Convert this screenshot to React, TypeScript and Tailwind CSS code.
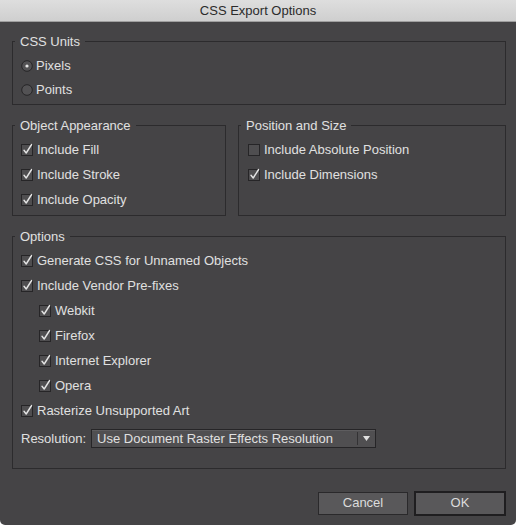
import React from 'react';

function CheckBox({ checked }: { checked: boolean }) {
  return (
    <svg width="13" height="13" viewBox="0 0 13 13" className="shrink-0">
      <rect x="0.5" y="1.5" width="11" height="11" fill="#4f4e50" stroke="#262527" />
      {checked && (
        <path d="M3 7.2 L5.2 10 L10.6 1.5" fill="none" stroke="#e4e4e4" strokeWidth="1.4" strokeLinecap="round" strokeLinejoin="round" />
      )}
    </svg>
  );
}

function Radio({ selected }: { selected: boolean }) {
  return (
    <svg width="12" height="12" viewBox="0 0 12 12" className="shrink-0">
      <circle cx="6" cy="6" r="5.3" fill="#535254" stroke="#262527" />
      {selected && <circle cx="6" cy="6" r="1.6" fill="#e6e6e6" />}
    </svg>
  );
}

function CheckRow({ label, checked = true, indent = false }: { label: string; checked?: boolean; indent?: boolean }) {
  return (
    <div className={`flex h-[25px] items-center gap-[3px] ${indent ? 'pl-[26px]' : 'pl-[8px]'}`}>
      <CheckBox checked={checked} />
      <span>{label}</span>
    </div>
  );
}

function RadioRow({ label, selected = false }: { label: string; selected?: boolean }) {
  return (
    <div className="flex h-[24px] items-center gap-[3px] pl-[8px]">
      <Radio selected={selected} />
      <span>{label}</span>
    </div>
  );
}

function Group({ title, className = '', children }: { title: string; className?: string; children: React.ReactNode }) {
  return (
    <fieldset className={`border border-[#2c2b2d] ${className}`}>
      <legend className="ml-[2px] px-[5px] leading-[15px]">{title}</legend>
      {children}
    </fieldset>
  );
}

export default function App() {
  return (
    <div className="w-[516px] h-[525px] bg-white">
      <div
        className="flex h-[525px] flex-col overflow-hidden rounded-b-[5px] bg-[#454446] text-[13px] text-[#e0e0e0]"
        style={{ fontFamily: '"Liberation Sans", Arial, sans-serif' }}
      >
        {/* Title bar */}
        <div className="flex h-[22px] shrink-0 items-center justify-center border-b border-[#9f9f9f] bg-gradient-to-b from-[#dedede] to-[#cfcfcf] text-[13px] text-[#2b2b2b]">
          CSS Export Options
        </div>

        <div className="flex flex-col pl-[12px] pr-[10px] pt-[12px]">
          <Group title="CSS Units" className="pt-[5px] pb-[2px]">
            <RadioRow label="Pixels" selected />
            <RadioRow label="Points" />
          </Group>

          <div className="mt-[13px] flex gap-[12px]">
            <Group title="Object Appearance" className="w-[214px] pt-[4px] pb-[3px]">
              <CheckRow label="Include Fill" />
              <CheckRow label="Include Stroke" />
              <CheckRow label="Include Opacity" />
            </Group>
            <Group title="Position and Size" className="flex-1 pt-[4px] pb-[3px] [&>div]:pl-[9px]">
              <CheckRow label="Include Absolute Position" checked={false} />
              <CheckRow label="Include Dimensions" />
            </Group>
          </div>

          <Group title="Options" className="mt-[13px] pt-[4px] pb-[19px]">
            <CheckRow label="Generate CSS for Unnamed Objects" />
            <CheckRow label="Include Vendor Pre-fixes" />
            <CheckRow label="Webkit" indent />
            <CheckRow label="Firefox" indent />
            <CheckRow label="Internet Explorer" indent />
            <CheckRow label="Opera" indent />
            <CheckRow label="Rasterize Unsupported Art" />
            <div className="mt-[6px] flex items-center gap-[5px] pl-[8px]">
              <span>Resolution:</span>
              <div className="flex h-[19px] w-[285px] items-center border border-[#262527] bg-[#504f51] shadow-[inset_0_1px_0_#5e5d5f]">
                <span className="flex-1 pl-[5px]">Use Document Raster Effects Resolution</span>
                <div className="h-[13px] w-px bg-[#333234]" />
                <div className="flex w-[17px] items-center justify-center">
                  <svg width="7" height="5" viewBox="0 0 7 5">
                    <path d="M0 0 H7 L3.5 5 Z" fill="#e0e0e0" />
                  </svg>
                </div>
              </div>
            </div>
          </Group>

          <div className="mt-[23px] flex justify-end gap-[6px]">
            <button className="h-[23px] w-[90px] border border-[#2a292b] bg-[#59585a] text-[13px] text-[#dcdcdc]">
              Cancel
            </button>
            <button className="h-[25px] w-[92px] -mt-[1px] border-2 border-[#1f1e20] bg-[#59585a] text-[13px] text-[#dcdcdc]">
              OK
            </button>
          </div>
        </div>
      </div>
    </div>
  );
}
